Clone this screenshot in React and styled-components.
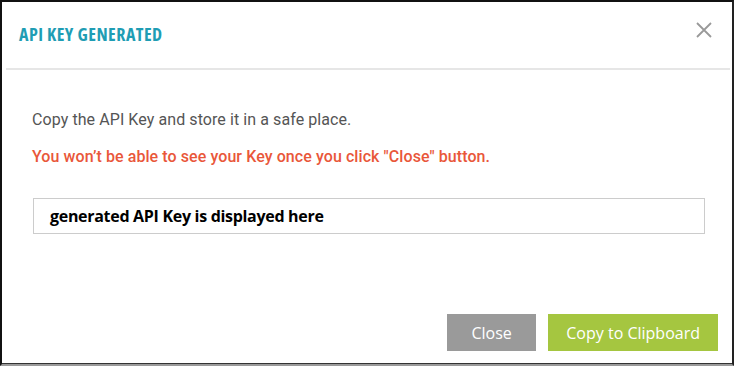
import React from "react";
import styled, { createGlobalStyle } from "styled-components";

const GlobalStyle = createGlobalStyle`
  html, body {
    margin: 0;
    padding: 0;
    background: #ffffff;
  }
`;

const Frame = styled.div`
  box-sizing: border-box;
  width: 734px;
  height: 366px;
  border-left: 2px solid #111;
  border-top: 2px solid #111;
  border-right: 2px solid #222;
  border-bottom: 2px solid #9a9a9a;
  box-shadow: inset 0 -1px 0 #333;
  display: flex;
  flex-direction: column;
  background: #fff;
`;

const Header = styled.div`
  display: flex;
  align-items: flex-start;
  justify-content: space-between;
  height: 46px;
  margin: 0 2px 0 4px;
  padding: 20px 18px 0 13px;
  border-bottom: 2px solid #e6e6e6;
`;

const Title = styled.h4`
  margin: 0;
  font-family: "Open Sans", "Liberation Sans", sans-serif;
  font-stretch: 75%;
  font-weight: 700;
  font-size: 18px;
  line-height: 24px;
  letter-spacing: 0.45px;
  color: #1f9db4;
`;

const CloseX = styled.button`
  border: none;
  background: none;
  padding: 0;
  width: 16px;
  height: 16px;
  cursor: pointer;
  display: flex;
`;

const Body = styled.div`
  flex: 1;
  padding: 40px 27px 0 30px;
  display: flex;
  flex-direction: column;
`;

const Note = styled.p`
  margin: 0;
  font-family: Roboto, "Liberation Sans", sans-serif;
  font-size: 16px;
  line-height: 20px;
  letter-spacing: 0.08px;
  color: ${(p) => (p.$warn ? "#e9573a" : "#555555")};
  font-weight: ${(p) => (p.$warn ? 500 : 400)};
  margin-bottom: ${(p) => (p.$warn ? "31px" : "17px")};
`;

const KeyBox = styled.div`
  box-sizing: border-box;
  height: 36px;
  margin-left: 1px;
  border: 1px solid #cccccc;
  display: flex;
  align-items: center;
  padding-left: 16px;
  font-family: "Open Sans", "Liberation Sans", sans-serif;
  font-weight: 700;
  font-size: 16px;
  letter-spacing: -0.3px;
  color: #000;
`;

const Footer = styled.div`
  display: flex;
  justify-content: flex-end;
  gap: 12px;
  padding: 0 14px 13px 0;
`;

const Button = styled.button`
  border: none;
  height: 37px;
  padding: 0 ${(p) => (p.$primary ? "18px" : "24.5px")};
  background: ${(p) => (p.$primary ? "#a5c640" : "#9a9a9a")};
  color: #ffffff;
  font-family: "Open Sans", "Liberation Sans", sans-serif;
  font-size: 16px;
  cursor: pointer;
`;

export default function App() {
  return (
    <>
      <GlobalStyle />
      <Frame>
        <Header>
          <Title>API KEY GENERATED</Title>
          <CloseX aria-label="Close">
            <svg width="16" height="16" viewBox="0 0 16 16">
              <path d="M1 1 L15 15 M15 1 L1 15" stroke="#999" strokeWidth="1.8" />
            </svg>
          </CloseX>
        </Header>
        <Body>
          <Note>Copy the API Key and store it in a safe place.</Note>
          <Note $warn>You won’t be able to see your Key once you click "Close" button.</Note>
          <KeyBox>generated API Key is displayed here</KeyBox>
        </Body>
        <Footer>
          <Button>Close</Button>
          <Button $primary>Copy to Clipboard</Button>
        </Footer>
      </Frame>
    </>
  );
}
